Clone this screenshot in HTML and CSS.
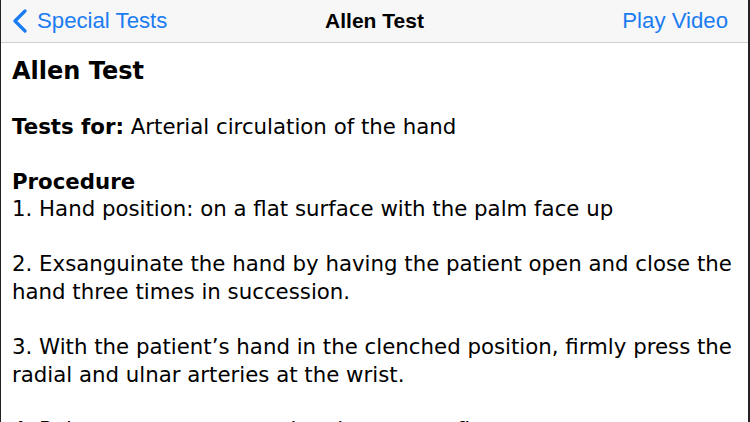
FILE: index.html
```html
<!DOCTYPE html>
<html>
<head>
<meta charset="utf-8">
<link rel="stylesheet" href="styles.css">
</head>
<body>
<div class="screen">
  <header class="navbar">
    <div class="nav-left">
      <svg class="chevron" width="16" height="24" viewBox="0 0 16 24"><path d="M13 2 L3 12 L13 22" fill="none" stroke="#1b7cf2" stroke-width="3.2" stroke-linecap="round" stroke-linejoin="round"/></svg>
      <span class="nav-link">Special Tests</span>
    </div>
    <div class="nav-title">Allen Test</div>
    <div class="nav-right"><span class="nav-link">Play Video</span></div>
  </header>
  <main class="content">
    <div class="title">Allen Test</div>
    <div class="blank"></div>
    <div class="line"><b>Tests for:</b> Arterial circulation of the hand</div>
    <div class="blank"></div>
    <div class="line"><b>Procedure</b></div>
    <div class="line">1. Hand position: on a flat surface with the palm face up</div>
    <div class="blank"></div>
    <div class="line">2. Exsanguinate the hand by having the patient open and close the hand three times in succession.</div>
    <div class="blank"></div>
    <div class="line">3. With the patient’s hand in the clenched position, firmly press the radial and ulnar arteries at the wrist.</div>
    <div class="blank"></div>
    <div class="line">4. Release pressure over the ulnar artery first.</div>
  </main>
</div>
</body>
</html>
```
FILE: styles.css
```css
html, body {
  margin: 0;
  padding: 0;
  background: #ffffff;
}
.screen {
  width: 750px;
  height: 422px;
  overflow: hidden;
  box-sizing: border-box;
  border-left: 1px solid #222;
  border-right: 2px solid #222;
  background: #fff;
}
.navbar {
  height: 42px;
  background: #f7f7f7;
  border-bottom: 1px solid #cfcfcf;
  display: grid;
  grid-template-columns: 1fr auto 1fr;
  align-items: center;
  font-family: "Liberation Sans", Arial, sans-serif;
  font-size: 22.2px;
}
.nav-left, .nav-right {
  display: flex;
  align-items: center;
}
.nav-left {
  padding-left: 11px;
}
.nav-right {
  justify-content: flex-end;
  padding-right: 20px;
}
.chevron {
  display: block;
  margin-right: 9px;
}
.nav-link {
  color: #1b7cf2;
}
.nav-title {
  font-weight: bold;
  font-size: 21px;
  color: #000;
}
.content {
  padding: 14.5px 12px 0 11px;
  font-family: "DejaVu Sans", Verdana, sans-serif;
  font-size: 21.3px;
  line-height: 27.55px;
  color: #000;
}
.title {
  font-weight: bold;
  font-size: 24px;
}
.blank {
  height: 27.55px;
}
.line b {
  font-weight: bold;
}
```
